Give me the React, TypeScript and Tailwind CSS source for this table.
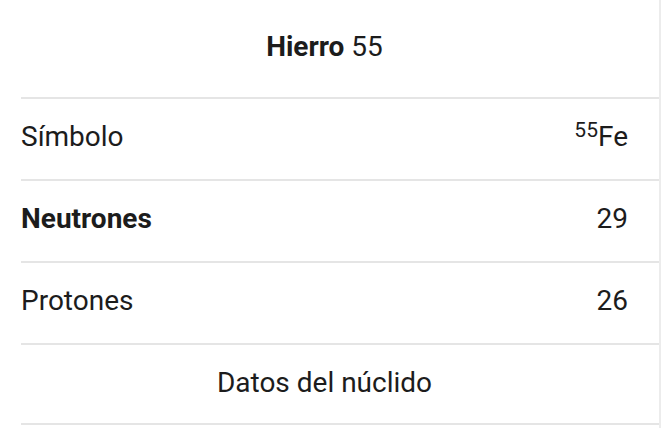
const rows = [
  { label: "Símbolo", bold: false, value: <span><span className="text-[21px] align-[9px] leading-none">55</span>Fe</span> },
  { label: "Neutrones", bold: true, value: "29" },
  { label: "Protones", bold: false, value: "26" },
];

export default function App() {
  return (
    <div className="w-[665px] h-[428px] bg-white overflow-hidden font-['Roboto',sans-serif] text-[#1c1c1c]">
      <div className="w-[661px] h-full border-r-2 border-[#ececec] pl-[21px]">
        <div className="h-[97px] flex items-center justify-center pr-[31px] pb-[3px] text-[28px]">
          <span><span className="font-bold">Hierro</span> 55</span>
        </div>
        {rows.map((row) => (
          <div
            key={row.label}
            className="h-[82px] border-t-2 border-[#e5e5e5] flex items-center justify-between pr-[31px] pb-[4px] text-[28px]"
          >
            <span className={row.bold ? "font-bold" : ""}>{row.label}</span>
            <span>{row.value}</span>
          </div>
        ))}
        <div className="h-[82px] border-t-2 border-b-2 border-[#e5e5e5] flex items-center justify-center pr-[31px] pb-[2px] text-[28px]">
          Datos del núclido
        </div>
      </div>
    </div>
  );
}
